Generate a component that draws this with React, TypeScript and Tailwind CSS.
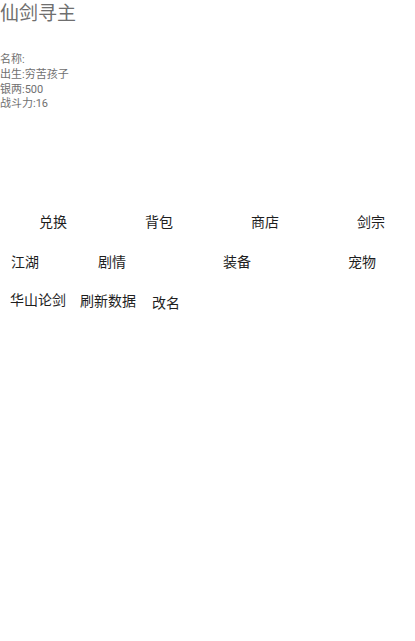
import React from "react";

export default function App() {
  return (
    <div className="w-[415px] h-[641px] bg-white overflow-hidden" style={{ fontFamily: 'Roboto, "Noto Sans CJK SC", sans-serif' }}>
      <div className="text-[19px] leading-[26px] text-[#6f6f6f] pt-[1px]">仙剑寻主</div>
      <div className="mt-[26px] text-[11px] leading-[14.8px] text-[#707070]">
        <div>名称:</div>
        <div>出生:穷苦孩子</div>
        <div>银两:500</div>
        <div>战斗力:16</div>
      </div>
      <div className="mt-[100px] flex text-[14px] leading-[20px] text-[#1e1e1e]">
        <div className="ml-[39px]">兑换</div>
        <div className="ml-[78px]">背包</div>
        <div className="ml-[78px]">商店</div>
        <div className="ml-[78px]">剑宗</div>
      </div>
      <div className="mt-[20px] flex text-[14px] leading-[20px] text-[#1e1e1e]">
        <div className="ml-[11px]">江湖</div>
        <div className="ml-[59px]">剧情</div>
        <div className="ml-[97px]">装备</div>
        <div className="ml-[97px]">宠物</div>
      </div>
      <div className="mt-[18px] flex items-start text-[14px] leading-[20px] text-[#1e1e1e]">
        <div className="ml-[10px]">华山论剑</div>
        <div className="ml-[14px] mt-[1px]">刷新数据</div>
        <div className="ml-[16px] mt-[3px]">改名</div>
      </div>
    </div>
  );
}
